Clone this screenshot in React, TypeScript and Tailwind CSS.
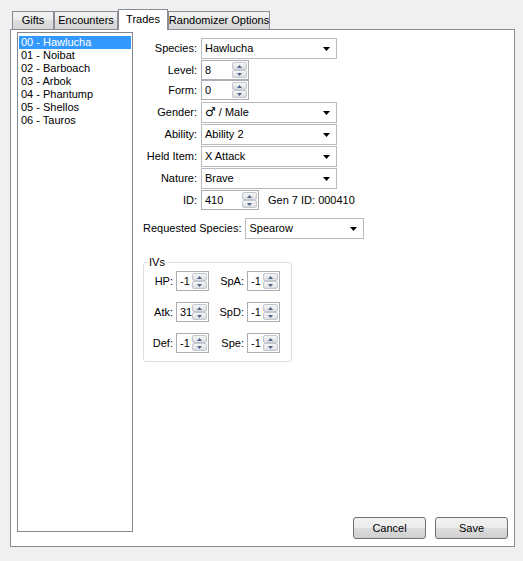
import React from 'react';

const TRADES = [
  '00 - Hawlucha',
  '01 - Noibat',
  '02 - Barboach',
  '03 - Arbok',
  '04 - Phantump',
  '05 - Shellos',
  '06 - Tauros',
];

function DropArrow() {
  return (
    <svg width="7" height="4" viewBox="0 0 7 4" className="shrink-0">
      <path d="M0 0h7L3.5 4z" fill="#000" />
    </svg>
  );
}

function Combo({ value, w }: { value: React.ReactNode; w: string }) {
  return (
    <div className={`h-[21px] ${w} border border-[#b8babf] bg-white flex items-center pl-[3px] pr-[6px]`}>
      <span className="flex-1 truncate">{value}</span>
      <DropArrow />
    </div>
  );
}

function SpinHalf({ up }: { up?: boolean }) {
  return (
    <div className="flex-1 border border-[#c3c7cf] rounded-[2px] bg-gradient-to-b from-[#f6f6f6] to-[#dcdde0] flex items-center justify-center">
      <svg width="5" height="3" viewBox="0 0 5 3">
        <path d={up ? 'M2.5 0L5 3H0z' : 'M0 0h5L2.5 3z'} fill="#4e6488" />
      </svg>
    </div>
  );
}

function Spin({ value, w }: { value: string; w: string }) {
  return (
    <div className={`h-[20px] ${w} border border-[#abadb3] bg-white flex`}>
      <span className="flex-1 pl-[3px] leading-[18px]">{value}</span>
      <div className="w-[16px] flex flex-col pr-px py-px">
        <SpinHalf up />
        <SpinHalf />
      </div>
    </div>
  );
}

function Row({ label, mt, children }: { label: string; mt: string; children: React.ReactNode }) {
  return (
    <div className={`flex items-center ${mt}`}>
      <span className="w-[54px] text-right whitespace-nowrap">{label}</span>
      <div className="ml-[4px] flex items-center">{children}</div>
    </div>
  );
}

function IvRow({ a, av, b, bv, mt }: { a: string; av: string; b: string; bv: string; mt: string }) {
  return (
    <div className={`flex items-center pl-[3px] ${mt}`}>
      <span className="w-[26px] text-right">{a}</span>
      <div className="ml-[3px]">
        <Spin value={av} w="w-[33px]" />
      </div>
      <span className="w-[35px] text-right">{b}</span>
      <div className="ml-[3px]">
        <Spin value={bv} w="w-[33px]" />
      </div>
    </div>
  );
}

function Tab({ label, w, active }: { label: string; w: string; active?: boolean }) {
  if (active) {
    return (
      <div
        className={`${w} h-[21px] -mb-px relative z-10 bg-white border border-b-0 border-[#898c95] flex items-start justify-center pt-[3px] whitespace-nowrap`}
      >
        {label}
      </div>
    );
  }
  return (
    <div
      className={`${w} h-[18px] border border-b-0 border-[#898c95] bg-[linear-gradient(#f3f3f3,#ebebeb_50%,#dddddd_50%,#d6d6d6)] flex items-center justify-center whitespace-nowrap`}
    >
      {label}
    </div>
  );
}

function Button({ label }: { label: string }) {
  return (
    <div className="w-[73px] h-[22px] rounded-[3px] border border-[#707070] bg-[linear-gradient(#f2f2f2,#ebebeb_50%,#dddddd_50%,#cfcfcf)] flex items-center justify-center">
      {label}
    </div>
  );
}

export default function App() {
  return (
    <div className="w-[523px] h-[561px] bg-[#f0f0f0] pt-[9px] pl-[10px] font-['Liberation_Sans','DejaVu_Sans',sans-serif] text-[11px] text-black leading-[13px]">
      <div className="flex items-end h-[20px] pl-[2px]">
        <Tab label="Gifts" w="w-[42px]" />
        <Tab label="Encounters" w="w-[64px]" />
        <Tab label="Trades" w="w-[50px]" active />
        <Tab label="Randomizer Options" w="w-[102px]" />
      </div>

      <div className="w-[505px] h-[518px] border border-[#898c95] bg-white flex">
        <div className="ml-[6px] mt-[2px] w-[116px] h-[500px] border border-[#828790] pt-[3px] px-px">
          {TRADES.map((t, i) => (
            <div
              key={t}
              className={
                i === 0
                  ? 'h-[13px] bg-[#3399ff] text-white pl-[2px] leading-[13px]'
                  : 'h-[13px] pl-[2px] leading-[13px]'
              }
            >
              {t}
            </div>
          ))}
        </div>

        <div className="ml-[10px] flex-1 flex flex-col">
          <Row label="Species:" mt="mt-[8px]">
            <Combo value="Hawlucha" w="w-[136px]" />
          </Row>
          <Row label="Level:" mt="mt-[1px]">
            <Spin value="8" w="w-[48px]" />
          </Row>
          <Row label="Form:" mt="mt-0">
            <Spin value="0" w="w-[48px]" />
          </Row>
          <Row label="Gender:" mt="mt-[2px]">
            <Combo
              value={
                <>
                  <span className="font-['DejaVu_Sans',sans-serif] text-[12px]">♂</span> / Male
                </>
              }
              w="w-[136px]"
            />
          </Row>
          <Row label="Ability:" mt="mt-[1px]">
            <Combo value="Ability 2" w="w-[136px]" />
          </Row>
          <Row label="Held Item:" mt="mt-[1px]">
            <Combo value="X Attack" w="w-[136px]" />
          </Row>
          <Row label="Nature:" mt="mt-[1px]">
            <Combo value="Brave" w="w-[136px]" />
          </Row>
          <Row label="ID:" mt="mt-[1px]">
            <Spin value="410" w="w-[58px]" />
            <span className="ml-[9px] whitespace-nowrap">Gen 7 ID: 000410</span>
          </Row>

          <div className="flex items-center mt-[8px]">
            <span className="whitespace-nowrap">Requested Species:</span>
            <div className="ml-[4px]">
              <Combo value="Spearow" w="w-[119px]" />
            </div>
          </div>

          <fieldset className="mt-[17px] w-[149px] h-[106px] border border-[#d5dfe5] rounded-[3px]">
            <legend className="ml-[4px] px-px leading-[13px]">IVs</legend>
            <IvRow a="HP:" av="-1" b="SpA:" bv="-1" mt="mt-[2px]" />
            <IvRow a="Atk:" av="31" b="SpD:" bv="-1" mt="mt-[11px]" />
            <IvRow a="Def:" av="-1" b="Spe:" bv="-1" mt="mt-[11px]" />
          </fieldset>

          <div className="mt-auto mb-[7px] mr-[6px] flex justify-end gap-[9px]">
            <Button label="Cancel" />
            <Button label="Save" />
          </div>
        </div>
      </div>
    </div>
  );
}
